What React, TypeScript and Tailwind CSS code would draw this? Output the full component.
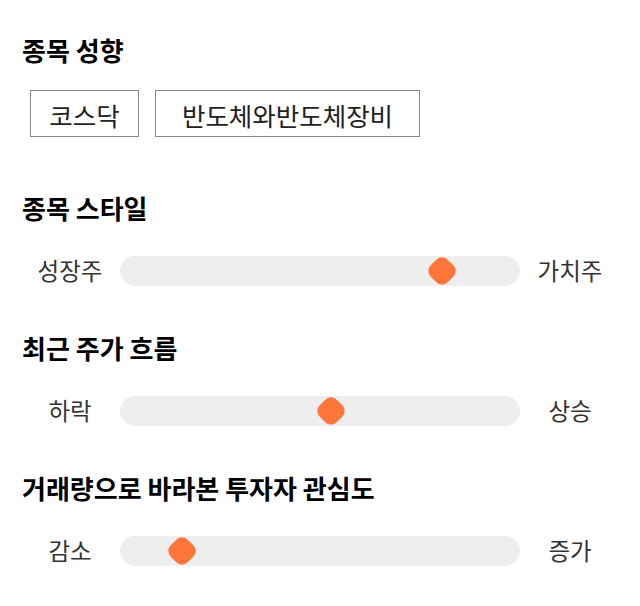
type SliderRowProps = {
  title: string;
  left: string;
  right: string;
  value: number;
};

function SliderRow({ title, left, right, value }: SliderRowProps) {
  return (
    <section className="mt-[32px] first:mt-0">
      <h2 className="pl-[2px] text-[26px] font-bold leading-[30px] text-black">{title}</h2>
      <div className="mt-[18px] flex h-[60px] items-center">
        <span className="w-[100px] text-center text-[23.5px] text-[#333]">{left}</span>
        <div className="relative h-[30px] flex-1 rounded-full bg-[#eeeeee]">
          <div
            className="absolute top-1/2 h-[24px] w-[24px] -translate-x-1/2 -translate-y-1/2 rotate-45 rounded-[8px] bg-[#ff763b]"
            style={{ left: `${value}%` }}
          />
        </div>
        <span className="w-[100px] text-center text-[23.5px] text-[#333]">{right}</span>
      </div>
    </section>
  );
}

export default function App() {
  const tags = [
    { label: "코스닥", width: "w-[109px]" },
    { label: "반도체와반도체장비", width: "w-[265px]" },
  ];

  return (
    <div className="min-h-[606px] bg-white px-5 pt-[35px] font-['Noto_Sans_CJK_KR','Noto_Sans',sans-serif]">
      <section>
        <h2 className="pl-[2px] text-[26px] font-bold leading-[30px] text-black">종목 성향</h2>
        <div className="mt-[25px] flex gap-4 pl-[10px]">
          {tags.map((tag) => (
            <span
              key={tag.label}
              className={`${tag.width} flex h-[47px] items-center justify-center border border-[#888] pt-[4px] text-[25.5px] text-[#222]`}
            >
              {tag.label}
            </span>
          ))}
        </div>
      </section>

      <div className="mt-[56px]">
        <SliderRow title="종목 스타일" left="성장주" right="가치주" value={80.4} />
        <SliderRow title="최근 주가 흐름" left="하락" right="상승" value={52.8} />
        <SliderRow title="거래량으로 바라본 투자자 관심도" left="감소" right="증가" value={15.6} />
      </div>
    </div>
  );
}
